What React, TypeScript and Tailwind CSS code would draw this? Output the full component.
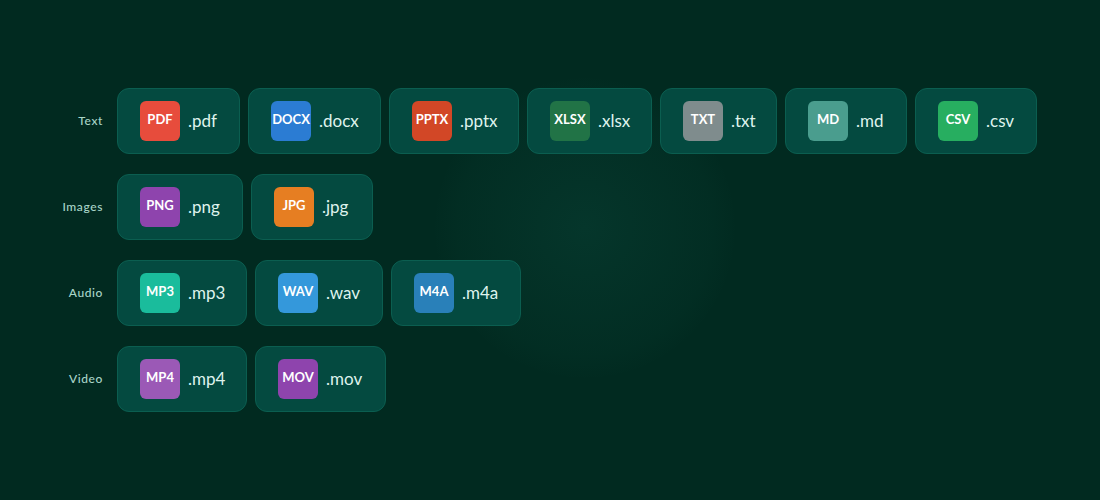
const rows = [
  { label: "Text", items: [
    { t: "PDF", e: ".pdf", c: "bg-[#e74c3c]", w: "w-[29px]" },
    { t: "DOCX", e: ".docx", c: "bg-[#2b7cd3]", w: "w-[39px]" },
    { t: "PPTX", e: ".pptx", c: "bg-[#d24726]", w: "w-[36px]" },
    { t: "XLSX", e: ".xlsx", c: "bg-[#217346]", w: "w-[31px]" },
    { t: "TXT", e: ".txt", c: "bg-[#7f8c8d]", w: "w-[23px]" },
    { t: "MD", e: ".md", c: "bg-[#4a9d8e]", w: "w-[28px]" },
    { t: "CSV", e: ".csv", c: "bg-[#27ae60]", w: "w-[28px]" },
  ]},
  { label: "Images", items: [
    { t: "PNG", e: ".png", c: "bg-[#8e44ad]", w: "w-[32px]" },
    { t: "JPG", e: ".jpg", c: "bg-[#e67e22]", w: "w-[28px]" },
  ]},
  { label: "Audio", items: [
    { t: "MP3", e: ".mp3", c: "bg-[#1abc9c]", w: "w-[36px]" },
    { t: "WAV", e: ".wav", c: "bg-[#3498db]", w: "w-[34px]" },
    { t: "M4A", e: ".m4a", c: "bg-[#2980b9]", w: "w-[36px]" },
  ]},
  { label: "Video", items: [
    { t: "MP4", e: ".mp4", c: "bg-[#9b59b6]", w: "w-[36px]" },
    { t: "MOV", e: ".mov", c: "bg-[#8e44ad]", w: "w-[37px]" },
  ]},
];

export default function App() {
  return (
    <div className="relative h-[500px] w-[1100px] overflow-hidden bg-[#012a20] font-['Lato','Noto_Sans',sans-serif]">
      <div className="absolute left-[435px] top-[78px] h-[300px] w-[300px] rounded-full bg-[radial-gradient(circle,#05362b_0%,#04332860_60%,#04322700_72%)]" />
      <div className="relative flex flex-col gap-5 pl-[40px] pt-[88px]">
        {rows.map((r) => (
          <div key={r.label} className="flex items-center gap-[14px]">
            <div className="w-[63px] whitespace-nowrap text-right text-[12px] font-medium tracking-[0.6px] text-[#a8d5c8]">{r.label}</div>
            <div className="flex gap-2">
              {r.items.map((i) => (
                <div key={i.t} className="flex items-center gap-2 rounded-xl border border-[#0b5e50] bg-[#044a40] px-[22px] py-3">
                  <div className={`flex h-10 w-10 items-center justify-center overflow-visible whitespace-nowrap rounded-md pb-[2px] text-[13px] font-bold text-white ${i.c}`}>{i.t}</div>
                  <div className={`whitespace-nowrap text-[17px] text-[#dff3ed] ${i.w}`}>{i.e}</div>
                </div>
              ))}
            </div>
          </div>
        ))}
      </div>
    </div>
  );
}
